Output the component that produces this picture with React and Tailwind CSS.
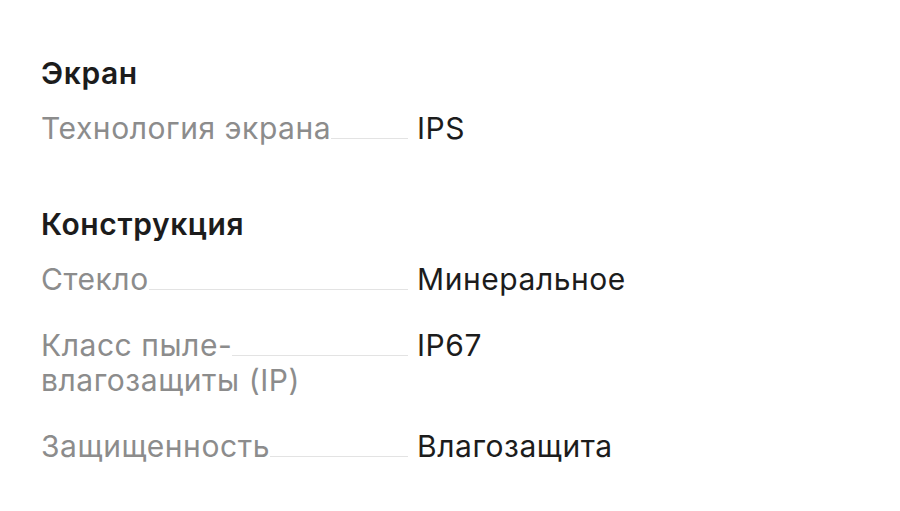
import React from "react";

const sections = [
  {
    title: "Экран",
    rows: [{ label: ["Технология экрана"], value: "IPS" }],
  },
  {
    title: "Конструкция",
    rows: [
      { label: ["Стекло"], value: "Минеральное" },
      { label: ["Класс пыле-", "влагозащиты (IP)"], value: "IP67" },
      { label: ["Защищенность"], value: "Влагозащита" },
    ],
  },
];

function SpecRow({ label, value }) {
  return (
    <div className="flex">
      <div className="w-[376px] shrink-0 text-[#8c8c8c]">
        <div className="flex items-end">
          <span className="whitespace-nowrap">{label[0]}</span>
          <span className="flex-1 mb-[7px] mr-[9px] border-b border-[#e3e3e3]" />
        </div>
        {label.slice(1).map((line) => (
          <div key={line}>{line}</div>
        ))}
      </div>
      <div className="text-[#1c1c1c]">{value}</div>
    </div>
  );
}

export default function App() {
  return (
    <div
      className="w-[900px] h-[511px] bg-white pl-[41px] pt-[55px]"
      style={{ fontFamily: "Inter, 'Noto Sans', sans-serif" }}
    >
      <div className="flex flex-col gap-[60px]">
        {sections.map((s) => (
          <div key={s.title}>
            <h2 className="text-[30px] leading-[36px] font-semibold text-[#1c1c1c] mb-[20px] tracking-[0.6px]">{s.title}</h2>
            <div className="flex flex-col gap-[31px] text-[30px] leading-[35px] tracking-[0.55px]">
              {s.rows.map((r) => (
                <SpecRow key={r.value} label={r.label} value={r.value} />
              ))}
            </div>
          </div>
        ))}
      </div>
    </div>
  );
}
